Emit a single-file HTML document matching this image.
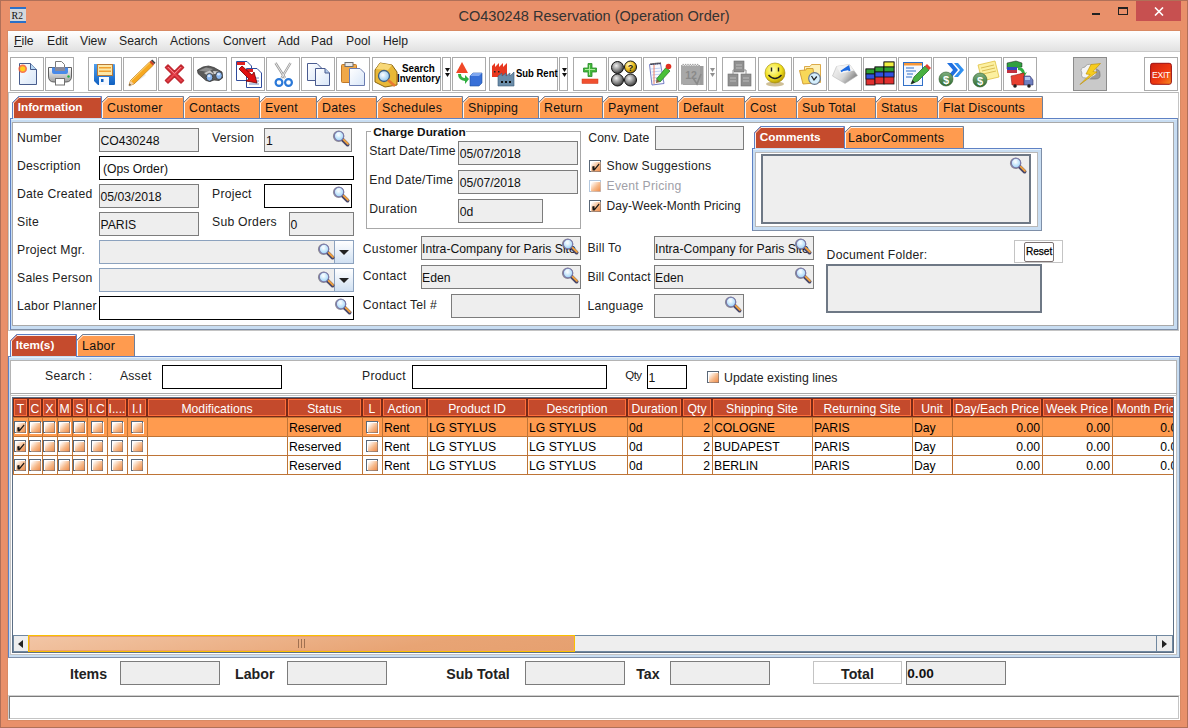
<!DOCTYPE html><html><head><meta charset="utf-8"><style>
html,body{margin:0;padding:0;width:1188px;height:728px;overflow:hidden;background:#E9906A;font-family:"Liberation Sans", sans-serif;}
div{box-sizing:border-box;}
</style></head><body>
<div style="position:absolute;left:0px;top:0px;width:1188px;height:728px;border:1px solid #B07058;background:#E9906A"></div>
<svg style="position:absolute;left:10px;top:7px" width="16" height="16" viewBox="0 0 16 16"><rect x="0" y="0" width="16" height="16" fill="#D4D8DC"/><rect x="0" y="0" width="16" height="2" fill="#2A70C8"/><rect x="0" y="14" width="16" height="2" fill="#2A70C8"/><text x="1.5" y="11.5" font-family="Liberation Serif" font-size="10" fill="#111">R</text><text x="8.2" y="12" font-family="Liberation Serif" font-size="9.5" fill="#222">2</text></svg>
<div style="position:absolute;left:394px;width:400px;text-align:center;top:7.81px;font-size:14.57px;line-height:16.76px;color:#333;font-weight:normal;white-space:nowrap;">CO430248 Reservation (Operation Order)</div>
<div style="position:absolute;left:1092px;top:13px;width:8px;height:2px;background:#222"></div>
<div style="position:absolute;left:1118px;top:7px;width:10px;height:8px;border:1px solid #222;border-top-width:2px"></div>
<div style="position:absolute;left:1136px;top:1px;width:45px;height:20px;background:#C75050"></div>
<svg style="position:absolute;left:1154px;top:7px" width="10" height="9" viewBox="0 0 10 9"><path d="M1 0.5L9 8.5M9 0.5L1 8.5" stroke="#fff" stroke-width="1.6"/></svg>
<div style="position:absolute;left:7px;top:30px;width:1174px;height:691px;border:1px solid #D98A64"></div>
<div style="position:absolute;left:8px;top:31px;width:1172px;height:689px;background:#fff"></div>
<div style="position:absolute;left:8px;top:31px;width:1172px;height:21px;background:linear-gradient(#FFFFFF,#F4F4F4 40%,#E2E2E2);border-bottom:1px solid #C9C9C9"></div>
<div style="position:absolute;left:14px;top:33.96px;font-size:12.2px;line-height:14.03px;color:#1E1E1E;font-weight:normal;white-space:nowrap;">File</div>
<div style="position:absolute;left:47px;top:33.96px;font-size:12.2px;line-height:14.03px;color:#1E1E1E;font-weight:normal;white-space:nowrap;">Edit</div>
<div style="position:absolute;left:80px;top:33.96px;font-size:12.2px;line-height:14.03px;color:#1E1E1E;font-weight:normal;white-space:nowrap;">View</div>
<div style="position:absolute;left:119px;top:33.96px;font-size:12.2px;line-height:14.03px;color:#1E1E1E;font-weight:normal;white-space:nowrap;">Search</div>
<div style="position:absolute;left:170px;top:33.96px;font-size:12.2px;line-height:14.03px;color:#1E1E1E;font-weight:normal;white-space:nowrap;">Actions</div>
<div style="position:absolute;left:223px;top:33.96px;font-size:12.2px;line-height:14.03px;color:#1E1E1E;font-weight:normal;white-space:nowrap;">Convert</div>
<div style="position:absolute;left:278px;top:33.96px;font-size:12.2px;line-height:14.03px;color:#1E1E1E;font-weight:normal;white-space:nowrap;">Add</div>
<div style="position:absolute;left:311px;top:33.96px;font-size:12.2px;line-height:14.03px;color:#1E1E1E;font-weight:normal;white-space:nowrap;">Pad</div>
<div style="position:absolute;left:346px;top:33.96px;font-size:12.2px;line-height:14.03px;color:#1E1E1E;font-weight:normal;white-space:nowrap;">Pool</div>
<div style="position:absolute;left:383px;top:33.96px;font-size:12.2px;line-height:14.03px;color:#1E1E1E;font-weight:normal;white-space:nowrap;">Help</div>
<div style="position:absolute;left:14px;top:46px;width:8px;height:1px;background:#222"></div>
<div style="position:absolute;left:8px;top:92px;width:1171px;height:1px;background:#B8B8B8"></div>
<div style="position:absolute;left:1178px;top:92px;width:1px;height:544px;background:#B8B8B8;display:none"></div>
<div style="position:absolute;left:10px;top:57px;width:34px;height:34px;border:1px solid #ABABAB;background:#fff"></div>
<div style="position:absolute;left:45px;top:57px;width:29px;height:34px;border:1px solid #ABABAB;background:#fff"></div>
<div style="position:absolute;left:88px;top:57px;width:34px;height:34px;border:1px solid #ABABAB;background:#fff"></div>
<div style="position:absolute;left:123px;top:57px;width:34px;height:34px;border:1px solid #ABABAB;background:#fff"></div>
<div style="position:absolute;left:158px;top:57px;width:34px;height:34px;border:1px solid #ABABAB;background:#fff"></div>
<div style="position:absolute;left:193px;top:57px;width:34px;height:34px;border:1px solid #ABABAB;background:#fff"></div>
<div style="position:absolute;left:231px;top:57px;width:34px;height:34px;border:1px solid #ABABAB;background:#fff"></div>
<div style="position:absolute;left:266px;top:57px;width:34px;height:34px;border:1px solid #ABABAB;background:#fff"></div>
<div style="position:absolute;left:301px;top:57px;width:34px;height:34px;border:1px solid #ABABAB;background:#fff"></div>
<div style="position:absolute;left:336px;top:57px;width:34px;height:34px;border:1px solid #ABABAB;background:#fff"></div>
<div style="position:absolute;left:372px;top:57px;width:69px;height:34px;border:1px solid #ABABAB;background:#fff"></div>
<div style="position:absolute;left:442px;top:57px;width:9px;height:34px;border:1px solid #ABABAB;background:#fff"></div>
<div style="position:absolute;left:452px;top:57px;width:34px;height:34px;border:1px solid #ABABAB;background:#fff"></div>
<div style="position:absolute;left:489px;top:57px;width:69px;height:34px;border:1px solid #ABABAB;background:#fff"></div>
<div style="position:absolute;left:559px;top:57px;width:9px;height:34px;border:1px solid #ABABAB;background:#fff"></div>
<div style="position:absolute;left:573px;top:57px;width:34px;height:34px;border:1px solid #ABABAB;background:#fff"></div>
<div style="position:absolute;left:608px;top:57px;width:34px;height:34px;border:1px solid #ABABAB;background:#fff"></div>
<div style="position:absolute;left:643px;top:57px;width:34px;height:34px;border:1px solid #ABABAB;background:#fff"></div>
<div style="position:absolute;left:678px;top:57px;width:29px;height:34px;border:1px solid #ABABAB;background:#fff"></div>
<div style="position:absolute;left:708px;top:57px;width:9px;height:34px;border:1px solid #ABABAB;background:#fff"></div>
<div style="position:absolute;left:722px;top:57px;width:34px;height:34px;border:1px solid #ABABAB;background:#fff"></div>
<div style="position:absolute;left:758px;top:57px;width:34px;height:34px;border:1px solid #ABABAB;background:#fff"></div>
<div style="position:absolute;left:793px;top:57px;width:34px;height:34px;border:1px solid #ABABAB;background:#fff"></div>
<div style="position:absolute;left:828px;top:57px;width:34px;height:34px;border:1px solid #ABABAB;background:#fff"></div>
<div style="position:absolute;left:863px;top:57px;width:34px;height:34px;border:1px solid #ABABAB;background:#fff"></div>
<div style="position:absolute;left:898px;top:57px;width:34px;height:34px;border:1px solid #ABABAB;background:#fff"></div>
<div style="position:absolute;left:933px;top:57px;width:34px;height:34px;border:1px solid #ABABAB;background:#fff"></div>
<div style="position:absolute;left:968px;top:57px;width:34px;height:34px;border:1px solid #ABABAB;background:#fff"></div>
<div style="position:absolute;left:1003px;top:57px;width:34px;height:34px;border:1px solid #ABABAB;background:#fff"></div>
<div style="position:absolute;left:1144px;top:57px;width:34px;height:34px;border:1px solid #ABABAB;background:#fff"></div>
<div style="position:absolute;left:1073px;top:57px;width:34px;height:34px;border:1px solid #8C8C8C;background:#C9C9C9"></div>
<svg style="position:absolute;left:0;top:0" width="1188" height="100" viewBox="0 0 1188 100"><defs>
<linearGradient id="gdoc" x1="0" y1="0" x2="1" y2="1"><stop offset="0" stop-color="#FFFFFF"/><stop offset="1" stop-color="#D8E6F8"/></linearGradient>
<linearGradient id="gblue" x1="0" y1="0" x2="0" y2="1"><stop offset="0" stop-color="#4FA0F0"/><stop offset="1" stop-color="#1060C0"/></linearGradient>
<radialGradient id="gball" cx="0.4" cy="0.35" r="0.7"><stop offset="0" stop-color="#F0F0F0"/><stop offset="0.6" stop-color="#808080"/><stop offset="1" stop-color="#303030"/></radialGradient>
<radialGradient id="gyball" cx="0.35" cy="0.3" r="0.8"><stop offset="0" stop-color="#FFF8C0"/><stop offset="0.5" stop-color="#F0C020"/><stop offset="1" stop-color="#806000"/></radialGradient>
<radialGradient id="gsmile" cx="0.4" cy="0.35" r="0.7"><stop offset="0" stop-color="#FFFFB0"/><stop offset="0.6" stop-color="#F0E020"/><stop offset="1" stop-color="#B09000"/></radialGradient>
<radialGradient id="glens" cx="0.4" cy="0.4" r="0.6"><stop offset="0" stop-color="#FFFFFF"/><stop offset="1" stop-color="#90C8F0"/></radialGradient>
<linearGradient id="gexit" x1="0" y1="0" x2="1" y2="1"><stop offset="0" stop-color="#D02010"/><stop offset="0.6" stop-color="#F03A10"/><stop offset="1" stop-color="#F89020"/></linearGradient>
<linearGradient id="gcoin" x1="0" y1="0" x2="0" y2="1"><stop offset="0" stop-color="#80B080"/><stop offset="1" stop-color="#2E6A2E"/></linearGradient>
<linearGradient id="gprint" x1="0" y1="0" x2="0" y2="1"><stop offset="0" stop-color="#FFFFFF"/><stop offset="1" stop-color="#A0A0A0"/></linearGradient>
</defs><path d="M19.5 63.5H30.5L36.5 69.5V84.5H19.5Z" fill="url(#gdoc)" stroke="#485C8C"/><path d="M30.5 63.5V69.5H36.5" fill="#B8D8F4" stroke="#485C8C"/><circle cx="22.7" cy="68.8" r="4.3" fill="#F86030" opacity="0.85"/><circle cx="22.7" cy="68.8" r="2.6" fill="#FFD020"/><path d="M55.5 61.5H61.5L64.5 64.5V72H55.5Z" fill="#fff" stroke="#7A7A7A"/><path d="M48.5 67.5H71.5V76Q71.5 82 66 82H54Q48.5 82 48.5 76Z" fill="url(#gprint)" stroke="#606060"/><path d="M52 67.5H68V72Q68 74 66 74H54Q52 74 52 72Z" fill="#4A8AE8"/><rect x="55" y="67" width="10" height="4" fill="#8A8A98"/><rect x="55.5" y="78.5" width="9" height="6.5" fill="#fff" stroke="#707070"/><circle cx="68.5" cy="76.5" r="1.2" fill="#20B040"/><path d="M94 64H114Q115 64 115 65V84Q115 85 114 85H98L94 81Z" fill="url(#gblue)"/><rect x="97.5" y="64.5" width="15" height="11" fill="#FCE8A8" stroke="#B87A38"/><rect x="99" y="67" width="12" height="1.5" fill="#F0A030"/><rect x="99" y="70.5" width="12" height="1.5" fill="#F0A030"/><rect x="99" y="77" width="10" height="8" fill="#F4F8FF"/><rect x="101" y="79" width="2.5" height="3" fill="#1060C0"/><path d="M129 86L145 74" stroke="#E0E0E0" stroke-width="3" opacity="0.7"/><path d="M129 85.5L130.5 80.5L149.5 62L153 65.5L134 84Z" fill="#F6A820" stroke="#C07A10" stroke-width="0.7"/><path d="M131 81L150 62.5" stroke="#FFD878" stroke-width="1"/><path d="M129 85.5L130.5 80.5L134 84Z" fill="#F0D0A8"/><path d="M129 85.5L129.6 83.4L131.2 84.9Z" fill="#444"/><path d="M149.5 62L151 60.6L154.4 64L153 65.5Z" fill="#D04020"/><path d="M151 60.6L152.3 59.5L155.5 62.7L154.4 64Z" fill="#404040"/><path d="M165.5 67.5L168 65L174.5 71.5L181 65L183.5 67.5L177 74L183.5 80.5L181 83L174.5 76.5L168 83L165.5 80.5L172 74Z" fill="#E8424C" stroke="#C02830" stroke-width="1.6" stroke-linejoin="round"/><path d="M168 67L174.5 73.5L181 67" stroke="#F8A0A8" stroke-width="1" fill="none" opacity="0.7"/><path d="M197.5 70L203 67L208.5 66L214 67.5L222 72L222.5 78L219 80.5L214 80L210 81.5L206 80.5L198 73.5Z" fill="#5A5A5A" stroke="#3A3A3A" stroke-width="0.8"/><path d="M199 70.5L206 67.5L213 69L208 72Z" fill="#909090"/><path d="M204 73L210 70.5L214 74L208 76Z" fill="#C8C8C8"/><path d="M213 71L219 71.5L218 74L214 74Z" fill="#D0D0D0"/><ellipse cx="209.5" cy="77.3" rx="3.3" ry="3.9" fill="#8CB8F0" stroke="#3A3A3A" stroke-width="0.9"/><ellipse cx="219" cy="75.6" rx="3.3" ry="3.9" fill="#8CB8F0" stroke="#3A3A3A" stroke-width="0.9"/><ellipse cx="209" cy="76" rx="1.5" ry="1.3" fill="#D8E8FF"/><ellipse cx="218.5" cy="74.3" rx="1.5" ry="1.3" fill="#D8E8FF"/><path d="M236.5 61.5H247L251.5 66V80.5H236.5Z" fill="#fff" stroke="#304C9C"/><rect x="237" y="62" width="8" height="3" fill="#E02020"/><path d="M246.5 68.5H257L261.5 73V87.5H246.5Z" fill="#fff" stroke="#304C9C"/><rect x="247" y="69" width="6" height="3" fill="#E02020"/><path d="M249 78H259M249 81H259M249 84H259" stroke="#5070B0" stroke-width="0.8"/><path d="M239 69L242 66L252 75L254 72L257 83L246 81L249 79Z" fill="#E01010" stroke="#700000" stroke-width="0.8"/><path d="M275.5 63L285 78M290.5 63L281.5 78" stroke="#9A9A9A" stroke-width="2.4"/><path d="M275.5 63L285 78M290.5 63L281.5 78" stroke="#E8E8E8" stroke-width="1"/><circle cx="279" cy="82.5" r="3.4" fill="none" stroke="#2A78D8" stroke-width="2.2"/><circle cx="288.5" cy="82.5" r="3.4" fill="none" stroke="#2A78D8" stroke-width="2.2"/><path d="M307.5 63.5H317L321.5 68V80.5H307.5Z" fill="url(#gdoc)" stroke="#4A5C90"/><path d="M315.5 68.5H325L329.5 73V85.5H315.5Z" fill="url(#gdoc)" stroke="#4A5C90"/><path d="M325 68.5V73H329.5" fill="#B0C8E8" stroke="#4A5C90"/><rect x="341.5" y="64.5" width="15" height="18" rx="1" fill="#F0A848" stroke="#C07828"/><rect x="345" y="62.5" width="8" height="4" fill="#E8E8E8" stroke="#707070"/><path d="M349.5 68.5H360L364.5 73V85.5H349.5Z" fill="url(#gdoc)" stroke="#6A7CB0"/><path d="M375 70L380 63L392 65L397 72V85L385 87L375 82Z" fill="#E8B838" stroke="#8A6410"/><path d="M380 63L392 65L388 70L376 69Z" fill="#F8D878"/><circle cx="384" cy="76" r="5.5" fill="url(#glens)" stroke="#406080" stroke-width="1.3"/><path d="M388 80L395 86" stroke="#E87830" stroke-width="2.6"/><path d="M445 68H450L447.5 72Z M445 73H450L447.5 77Z" fill="#111"/><path d="M462 62L468 73H456Z" fill="#F04828"/><path d="M458 74Q458 80 465 81L465 84L469 79L465 75L465 78Q461 78 461 74Z" fill="#30B040"/><path d="M470 76L473 73H482V83L479 86H470Z" fill="#3870D8" stroke="#2050A0" stroke-width="0.6"/><path d="M470 76L473 73H482L479 76Z" fill="#80A8F0"/><path d="M492 77V66L495 63V67L499 63V67L503 63V67L507 63V77Z" fill="#E83820"/><path d="M494 71h1.5v1.5h-1.5zM498 71h1.5v1.5h-1.5z" fill="#222"/><path d="M498 86V76L502 73V76L506 73V76L510 73V76L514 72V86Z" fill="#6A8CA8" stroke="#3A5A78" stroke-width="0.6"/><path d="M501 81h2v2h-2zM505 81h2v2h-2zM509 81h2v2h-2z" fill="#111"/><path d="M562 68H567L564.5 72Z M562 73H567L564.5 77Z" fill="#111"/><path d="M588 63.5H592V68H596.5V72H592V76.5H588V72H583.5V68H588Z" fill="#44B83C" stroke="#2A8A2A" stroke-width="0.8"/><path d="M589.5 65V75M585 69.5H595" stroke="#B8F0A8" stroke-width="0.9"/><rect x="582" y="79" width="16" height="4.5" fill="#F05030" stroke="#D03818" stroke-width="0.5"/><g stroke="#111" stroke-width="1"><circle cx="617.5" cy="67.5" r="6" fill="url(#gball)"/><circle cx="630.5" cy="67" r="6" fill="url(#gyball)"/><circle cx="617.5" cy="80" r="6" fill="url(#gball)"/><circle cx="630.5" cy="80" r="6" fill="url(#gball)"/></g><text x="630.5" y="70.5" font-size="9" font-weight="bold" text-anchor="middle" fill="#222" font-family="Liberation Sans">?</text><path d="M649.5 64.5L660.5 63.5L664 83.5L652 85Z" fill="#F8FAFF" stroke="#6870C0" stroke-width="0.9"/><path d="M651 69L661.5 68M651.5 72L662 71M652 75L662.5 74M652.5 78L663 77M652.8 81L663.3 80" stroke="#A8C0F0" stroke-width="0.7"/><path d="M654 65V84" stroke="#F06040" stroke-width="0.8"/><path d="M650.5 64.2L661 63.2" stroke="#222" stroke-width="1.8" stroke-dasharray="1.2 0.8"/><path d="M656.5 79L666 67.5L670 71L660 82Z" fill="#48C038" stroke="#207020" stroke-width="0.7"/><path d="M656.5 79L660 82L656 83Z" fill="#806040"/><circle cx="668.5" cy="66.5" r="2.8" fill="#E03020"/><rect x="683" y="66" width="20.5" height="19" fill="#9C9C9C"/><rect x="681" y="65" width="19" height="19.5" fill="#A8A8A8"/><path d="M682.5 64.5H699" stroke="#F0F0F0" stroke-width="2.4" stroke-dasharray="1.4 1"/><path d="M682.5 64.5H699" stroke="#707070" stroke-width="0.6" stroke-dasharray="1.4 1"/><text x="691" y="78.5" font-size="10.5" font-weight="bold" text-anchor="middle" fill="#8A8A8A" font-family="Liberation Sans">12</text><path d="M693 78L697 84L701 74" stroke="#8A8A8A" stroke-width="1.6" fill="none"/><path d="M710 68H715L712.5 72Z M710 73H715L712.5 77Z" fill="#909090"/><rect x="734" y="61" width="10" height="11" fill="#909090" stroke="#707070" stroke-width="0.6"/><rect x="728" y="74" width="10" height="12" fill="#909090" stroke="#707070" stroke-width="0.6"/><rect x="741" y="74" width="10" height="12" fill="#909090" stroke="#707070" stroke-width="0.6"/><path d="M733 74V70H746V74" stroke="#909090" fill="none"/><path d="M736 65h6M736 68h6M730 78h6M730 81h6M743 78h6M743 81h6" stroke="#C8C8C8" stroke-width="0.8"/><ellipse cx="775" cy="84" rx="9" ry="2.5" fill="#A08030" opacity="0.5"/><circle cx="775" cy="73" r="10" fill="url(#gsmile)" stroke="#A08800" stroke-width="0.6"/><path d="M771.5 67.5v4M778.5 67.5v4" stroke="#222" stroke-width="1.4"/><path d="M768.5 75Q775 82 781.5 75" stroke="#222" stroke-width="1.4" fill="none"/><path d="M804.5 66.5H810L811.5 64.5H820.5V82.5H804.5Z" fill="#FDF0B8" stroke="#D8A038" stroke-width="0.9"/><path d="M799.5 70.5L806 70L806.5 68.5H813L815 83L803 84Z" fill="#F8D858" stroke="#D09A30" stroke-width="0.9"/><circle cx="814.5" cy="78.5" r="5.8" fill="#D4EEFC" stroke="#6A7A90" stroke-width="1.2"/><path d="M811.5 76L814 80L816.8 76.5" stroke="#222" stroke-width="1.3" fill="none"/><defs><linearGradient id="gkey" x1="0" y1="0" x2="1" y2="0.6"><stop offset="0" stop-color="#F8F8F8"/><stop offset="0.6" stop-color="#D8D8D8"/><stop offset="1" stop-color="#808080"/></linearGradient></defs><path d="M836.5 66.5L849.5 64.5L857.5 75.5L845 83.5L832.5 76Z" fill="url(#gkey)" stroke="#B8B8B8" stroke-width="0.6"/><path d="M836.5 66.5L849.5 64.5L854 70.5L840.5 73.5Z" fill="#F4F4F4"/><path d="M841 71.5L848.5 66.5L849.5 71M843.5 70L849 69" stroke="#1E6AE0" stroke-width="1.9" fill="none"/><g stroke="#111" stroke-width="0.8"><rect x="866" y="69" width="9" height="16" fill="#E03030"/><rect x="866" y="69" width="9" height="5" fill="#30A030"/><rect x="866" y="74" width="9" height="5" fill="#3050E0"/><rect x="875" y="67" width="9" height="17" fill="#E03030"/><rect x="875" y="67" width="9" height="5" fill="#30A030"/><rect x="875" y="72" width="9" height="5" fill="#3050E0"/><rect x="884" y="62" width="10" height="22" fill="#E03030"/><rect x="884" y="62" width="10" height="5" fill="#F0F040"/><rect x="884" y="67" width="10" height="5" fill="#30A030"/><rect x="884" y="72" width="10" height="5" fill="#3050E0"/></g><rect x="903.5" y="62.5" width="19" height="23" fill="#F4F8FF" stroke="#3070C8"/><rect x="904" y="63" width="18" height="2.5" fill="#F89838"/><path d="M906 68h8M906 71h10M907 74h6M906 77h6" stroke="#3070C8" stroke-width="1"/><path d="M911 84L914 77L925 66L929 70L918 81Z" fill="#48B040" stroke="#206820" stroke-width="0.7"/><path d="M925 66L927 64L931 68L929 70Z" fill="#E04030"/><path d="M911 84L912.5 80L915 82.5Z" fill="#222"/><path d="M947 63L952 63L958 70L952 77L947 77L953 70Z" fill="#2070E0"/><path d="M954 63L958 63L964 70L958 77L954 77L960 70Z" fill="#3090F0"/><circle cx="946" cy="79" r="7" fill="url(#gcoin)" stroke="#2A5A2A" stroke-width="0.6"/><text x="946" y="83.5" font-size="11" font-weight="bold" text-anchor="middle" fill="#fff" font-family="Liberation Sans">$</text><path d="M978 65L995 61L999 77L982 81Z" fill="#FCF0A0" stroke="#E0C040" stroke-width="0.8"/><path d="M981 68L994 65M982 71L995 68M983 74L996 71" stroke="#D0B040" stroke-width="0.8"/><circle cx="980" cy="80" r="7" fill="url(#gcoin)" stroke="#2A5A2A" stroke-width="0.6"/><text x="980" y="84.5" font-size="11" font-weight="bold" text-anchor="middle" fill="#fff" font-family="Liberation Sans">$</text><path d="M1007 63L1016 61L1022 63V67L1007 69Z" fill="#30A040" stroke="#222" stroke-width="0.5"/><rect x="1007" y="67" width="10" height="3" fill="#3048C0"/><rect x="1007" y="70" width="10" height="3" fill="#C03040"/><path d="M1018 67Q1024 67 1025 73L1027 72L1024 77L1020 73L1022 73Q1021 70 1018 70Z" fill="#30B040"/><path d="M1011 76L1024 73V85H1012Z" fill="#E84030" stroke="#902020" stroke-width="0.6"/><path d="M1024 76H1030L1033 80V85H1024Z" fill="#7080C0" stroke="#303060" stroke-width="0.6"/><rect x="1025" y="77" width="5" height="3" fill="#B0C8F0"/><circle cx="1015" cy="86" r="1.8" fill="#222"/><circle cx="1029" cy="86" r="1.8" fill="#222"/><path d="M1094 70Q1100 68 1100 74Q1101 79 1095 79H1090Z" fill="#9A9A9A" stroke="#707070" stroke-width="0.6"/><path d="M1082 73Q1079 68 1085 67Q1087 63 1092 65Q1097 64 1096 70Q1098 75 1092 77Q1090 80 1086 78Q1080 78 1082 73Z" fill="#F4F4F4" stroke="#909090" stroke-width="0.7"/><path d="M1091 64.5L1100.5 63.5L1093 71.5L1097 72L1080 84.5L1090 74.5L1086 74Z" fill="#F6CC1E" stroke="#B88A00" stroke-width="0.6" stroke-linejoin="round"/><rect x="1150.6" y="63.3" width="20.8" height="21" rx="2.2" fill="url(#gexit)" stroke="#9A1010" stroke-width="1"/><text x="1161" y="77.6" font-size="9.6" text-anchor="middle" fill="#fff" font-family="Liberation Sans" letter-spacing="-0.4" textLength="18" lengthAdjust="spacingAndGlyphs">EXIT</text></svg>
<div style="position:absolute;left:401.6px;top:63.48px;font-size:10.3px;line-height:11.85px;color:#000;font-weight:bold;white-space:nowrap;transform:scaleX(0.955);transform-origin:0 0">Search</div>
<div style="position:absolute;left:396.9px;top:72.58px;font-size:10.3px;line-height:11.85px;color:#000;font-weight:bold;white-space:nowrap;transform:scaleX(0.935);transform-origin:0 0">Inventory</div>
<div style="position:absolute;left:515.9px;top:68.27px;font-size:10.2px;line-height:11.73px;color:#000;font-weight:bold;white-space:nowrap;transform:scaleX(0.93);transform-origin:0 0">Sub Rent</div>
<svg style="position:absolute;left:0;top:0" width="1188" height="120" viewBox="0 0 1188 120"><path d="M101.5 118V102.5L107.5 96.5H183.5V118" fill="#FF9B4F" stroke="#6D7F9A" stroke-width="1"/><path d="M102.5 118V103L108 97.5H182.5" fill="none" stroke="#FFFFFF" stroke-width="1" opacity="0.9"/><path d="M183.5 118V102.5L189.5 96.5H259.5V118" fill="#FF9B4F" stroke="#6D7F9A" stroke-width="1"/><path d="M184.5 118V103L190 97.5H258.5" fill="none" stroke="#FFFFFF" stroke-width="1" opacity="0.9"/><path d="M259.5 118V102.5L265.5 96.5H316.5V118" fill="#FF9B4F" stroke="#6D7F9A" stroke-width="1"/><path d="M260.5 118V103L266 97.5H315.5" fill="none" stroke="#FFFFFF" stroke-width="1" opacity="0.9"/><path d="M316.5 118V102.5L322.5 96.5H376.5V118" fill="#FF9B4F" stroke="#6D7F9A" stroke-width="1"/><path d="M317.5 118V103L323 97.5H375.5" fill="none" stroke="#FFFFFF" stroke-width="1" opacity="0.9"/><path d="M376.5 118V102.5L382.5 96.5H462.5V118" fill="#FF9B4F" stroke="#6D7F9A" stroke-width="1"/><path d="M377.5 118V103L383 97.5H461.5" fill="none" stroke="#FFFFFF" stroke-width="1" opacity="0.9"/><path d="M462.5 118V102.5L468.5 96.5H538.5V118" fill="#FF9B4F" stroke="#6D7F9A" stroke-width="1"/><path d="M463.5 118V103L469 97.5H537.5" fill="none" stroke="#FFFFFF" stroke-width="1" opacity="0.9"/><path d="M538.5 118V102.5L544.5 96.5H602.5V118" fill="#FF9B4F" stroke="#6D7F9A" stroke-width="1"/><path d="M539.5 118V103L545 97.5H601.5" fill="none" stroke="#FFFFFF" stroke-width="1" opacity="0.9"/><path d="M602.5 118V102.5L608.5 96.5H677.5V118" fill="#FF9B4F" stroke="#6D7F9A" stroke-width="1"/><path d="M603.5 118V103L609 97.5H676.5" fill="none" stroke="#FFFFFF" stroke-width="1" opacity="0.9"/><path d="M677.5 118V102.5L683.5 96.5H744.5V118" fill="#FF9B4F" stroke="#6D7F9A" stroke-width="1"/><path d="M678.5 118V103L684 97.5H743.5" fill="none" stroke="#FFFFFF" stroke-width="1" opacity="0.9"/><path d="M744.5 118V102.5L750.5 96.5H796.5V118" fill="#FF9B4F" stroke="#6D7F9A" stroke-width="1"/><path d="M745.5 118V103L751 97.5H795.5" fill="none" stroke="#FFFFFF" stroke-width="1" opacity="0.9"/><path d="M796.5 118V102.5L802.5 96.5H875.5V118" fill="#FF9B4F" stroke="#6D7F9A" stroke-width="1"/><path d="M797.5 118V103L803 97.5H874.5" fill="none" stroke="#FFFFFF" stroke-width="1" opacity="0.9"/><path d="M875.5 118V102.5L881.5 96.5H937.5V118" fill="#FF9B4F" stroke="#6D7F9A" stroke-width="1"/><path d="M876.5 118V103L882 97.5H936.5" fill="none" stroke="#FFFFFF" stroke-width="1" opacity="0.9"/><path d="M937.5 118V102.5L943.5 96.5H1042.5V118" fill="#FF9B4F" stroke="#6D7F9A" stroke-width="1"/><path d="M938.5 118V103L944 97.5H1041.5" fill="none" stroke="#FFFFFF" stroke-width="1" opacity="0.9"/><path d="M12.5 118V102.5L18.5 96.5H101.5V118" fill="#C54B2D" stroke="#5E81C4" stroke-width="1"/><path d="M13.5 118V103L19 97.5H100.5" fill="none" stroke="#FFFFFF" stroke-width="1" opacity="0.9"/></svg>
<div style="position:absolute;left:17.7px;top:101.32px;font-size:11.8px;line-height:13.57px;color:#FFFFFF;font-weight:bold;white-space:nowrap;">Information</div>
<div style="position:absolute;left:107px;top:100.78px;font-size:12.4px;line-height:14.26px;color:#111;font-weight:normal;white-space:nowrap;letter-spacing:0.25px;">Customer</div>
<div style="position:absolute;left:189px;top:100.78px;font-size:12.4px;line-height:14.26px;color:#111;font-weight:normal;white-space:nowrap;letter-spacing:0.25px;">Contacts</div>
<div style="position:absolute;left:265px;top:100.78px;font-size:12.4px;line-height:14.26px;color:#111;font-weight:normal;white-space:nowrap;letter-spacing:0.25px;">Event</div>
<div style="position:absolute;left:322px;top:100.78px;font-size:12.4px;line-height:14.26px;color:#111;font-weight:normal;white-space:nowrap;letter-spacing:0.25px;">Dates</div>
<div style="position:absolute;left:382px;top:100.78px;font-size:12.4px;line-height:14.26px;color:#111;font-weight:normal;white-space:nowrap;letter-spacing:0.25px;">Schedules</div>
<div style="position:absolute;left:468px;top:100.78px;font-size:12.4px;line-height:14.26px;color:#111;font-weight:normal;white-space:nowrap;letter-spacing:0.25px;">Shipping</div>
<div style="position:absolute;left:544px;top:100.78px;font-size:12.4px;line-height:14.26px;color:#111;font-weight:normal;white-space:nowrap;letter-spacing:0.25px;">Return</div>
<div style="position:absolute;left:608px;top:100.78px;font-size:12.4px;line-height:14.26px;color:#111;font-weight:normal;white-space:nowrap;letter-spacing:0.25px;">Payment</div>
<div style="position:absolute;left:683px;top:100.78px;font-size:12.4px;line-height:14.26px;color:#111;font-weight:normal;white-space:nowrap;letter-spacing:0.25px;">Default</div>
<div style="position:absolute;left:750px;top:100.78px;font-size:12.4px;line-height:14.26px;color:#111;font-weight:normal;white-space:nowrap;letter-spacing:0.25px;">Cost</div>
<div style="position:absolute;left:802px;top:100.78px;font-size:12.4px;line-height:14.26px;color:#111;font-weight:normal;white-space:nowrap;letter-spacing:0.25px;">Sub Total</div>
<div style="position:absolute;left:881px;top:100.78px;font-size:12.4px;line-height:14.26px;color:#111;font-weight:normal;white-space:nowrap;letter-spacing:0.25px;">Status</div>
<div style="position:absolute;left:943px;top:100.78px;font-size:12.4px;line-height:14.26px;color:#111;font-weight:normal;white-space:nowrap;letter-spacing:0.25px;">Flat Discounts</div>
<div style="position:absolute;left:8px;top:92px;width:1171px;height:239px;border:1px solid #C4C4C4;border-top-color:#B8B8B8"></div>
<div style="position:absolute;left:10px;top:118px;width:1168px;height:212px;background:#C8DDF2;border-top:1px solid #5E81C4;border-left:1px solid #5E81C4;border-right:1px solid #7E8FA8;border-bottom:1px solid #7E8FA8"></div>
<div style="position:absolute;left:11px;top:119px;width:1166px;height:1px;background:#E6F0FA"></div>
<div style="position:absolute;left:12px;top:122px;width:1162px;height:204px;background:#fff;border:1px solid #A9A9A9"></div>
<div style="position:absolute;left:13px;top:118px;width:89px;height:1px;background:#C8DDF2"></div>
<div style="position:absolute;left:17px;top:130.96px;font-size:12.2px;line-height:14.03px;color:#222;font-weight:normal;white-space:nowrap;letter-spacing:0.25px;">Number</div>
<div style="position:absolute;left:17px;top:158.96px;font-size:12.2px;line-height:14.03px;color:#222;font-weight:normal;white-space:nowrap;letter-spacing:0.25px;">Description</div>
<div style="position:absolute;left:17px;top:186.96px;font-size:12.2px;line-height:14.03px;color:#222;font-weight:normal;white-space:nowrap;letter-spacing:0.25px;">Date Created</div>
<div style="position:absolute;left:17px;top:214.96px;font-size:12.2px;line-height:14.03px;color:#222;font-weight:normal;white-space:nowrap;letter-spacing:0.25px;">Site</div>
<div style="position:absolute;left:17px;top:242.96px;font-size:12.2px;line-height:14.03px;color:#222;font-weight:normal;white-space:nowrap;letter-spacing:0.25px;">Project Mgr.</div>
<div style="position:absolute;left:17px;top:270.96px;font-size:12.2px;line-height:14.03px;color:#222;font-weight:normal;white-space:nowrap;letter-spacing:0.25px;">Sales Person</div>
<div style="position:absolute;left:17px;top:298.96px;font-size:12.2px;line-height:14.03px;color:#222;font-weight:normal;white-space:nowrap;letter-spacing:0.25px;">Labor Planner</div>
<div style="position:absolute;left:99px;top:128px;width:100px;height:24px;background:#EEEEEE;border:1px solid #7C7C7C;"></div>
<div style="position:absolute;left:99px;top:128px;width:99px;height:23px;overflow:hidden">
<div style="position:absolute;left:1.5px;top:5.96px;font-size:12.2px;line-height:14.03px;color:#111;font-weight:normal;white-space:nowrap;">CO430248</div>
</div>
<div style="position:absolute;left:99px;top:156px;width:255px;height:24px;background:#FFFFFF;border:1px solid #000000;"></div>
<div style="position:absolute;left:99px;top:156px;width:254px;height:23px;overflow:hidden">
<div style="position:absolute;left:4px;top:5.96px;font-size:12.2px;line-height:14.03px;color:#111;font-weight:normal;white-space:nowrap;">(Ops Order)</div>
</div>
<div style="position:absolute;left:99px;top:184px;width:100px;height:24px;background:#EEEEEE;border:1px solid #7C7C7C;"></div>
<div style="position:absolute;left:99px;top:184px;width:99px;height:23px;overflow:hidden">
<div style="position:absolute;left:1.5px;top:5.96px;font-size:12.2px;line-height:14.03px;color:#111;font-weight:normal;white-space:nowrap;">05/03/2018</div>
</div>
<div style="position:absolute;left:99px;top:212px;width:100px;height:24px;background:#EEEEEE;border:1px solid #7C7C7C;"></div>
<div style="position:absolute;left:99px;top:212px;width:99px;height:23px;overflow:hidden">
<div style="position:absolute;left:1.5px;top:5.96px;font-size:12.2px;line-height:14.03px;color:#111;font-weight:normal;white-space:nowrap;">PARIS</div>
</div>
<div style="position:absolute;left:212px;top:130.96px;font-size:12.2px;line-height:14.03px;color:#222;font-weight:normal;white-space:nowrap;letter-spacing:0.25px;">Version</div>
<div style="position:absolute;left:212px;top:186.96px;font-size:12.2px;line-height:14.03px;color:#222;font-weight:normal;white-space:nowrap;letter-spacing:0.25px;">Project</div>
<div style="position:absolute;left:212px;top:214.96px;font-size:12.2px;line-height:14.03px;color:#222;font-weight:normal;white-space:nowrap;letter-spacing:0.25px;">Sub Orders</div>
<div style="position:absolute;left:264px;top:128px;width:88px;height:24px;background:#EEEEEE;border:1px solid #7C7C7C;"></div>
<div style="position:absolute;left:264px;top:128px;width:87px;height:23px;overflow:hidden">
<div style="position:absolute;left:2px;top:5.96px;font-size:12.2px;line-height:14.03px;color:#111;font-weight:normal;white-space:nowrap;">1</div>
</div>
<div style="position:absolute;left:264px;top:184px;width:88px;height:24px;background:#FFFFFF;border:1px solid #000000;"></div>
<div style="position:absolute;left:289px;top:212px;width:65px;height:24px;background:#EEEEEE;border:1px solid #7C7C7C;"></div>
<div style="position:absolute;left:289px;top:212px;width:64px;height:23px;overflow:hidden">
<div style="position:absolute;left:1.5px;top:5.96px;font-size:12.2px;line-height:14.03px;color:#111;font-weight:normal;white-space:nowrap;">0</div>
</div>
<div style="position:absolute;left:99px;top:240px;width:255px;height:24px;background:#EEEEEE;border:1px solid #8CA2BE"></div>
<div style="position:absolute;left:334px;top:240px;width:20px;height:24px;background:linear-gradient(#FFFFFF,#D0E0F2);border:1px solid #8CA2BE"></div>
<svg style="position:absolute;left:339px;top:250px" width="10" height="5" viewBox="0 0 10 5"><path d="M0 0H10L5 5Z" fill="#222"/></svg>
<div style="position:absolute;left:99px;top:268px;width:255px;height:24px;background:#EEEEEE;border:1px solid #8CA2BE"></div>
<div style="position:absolute;left:334px;top:268px;width:20px;height:24px;background:linear-gradient(#FFFFFF,#D0E0F2);border:1px solid #8CA2BE"></div>
<svg style="position:absolute;left:339px;top:278px" width="10" height="5" viewBox="0 0 10 5"><path d="M0 0H10L5 5Z" fill="#222"/></svg>
<div style="position:absolute;left:99px;top:296px;width:255px;height:24px;background:#FFFFFF;border:1px solid #000000;"></div>
<div style="position:absolute;left:366px;top:131px;width:215px;height:98px;border:1px solid #A8A8A8"></div>
<div style="position:absolute;left:371px;top:126px;width:95px;height:10px;background:#fff"></div>
<div style="position:absolute;left:373.2px;top:125.52px;font-size:11.8px;line-height:13.57px;color:#111;font-weight:bold;white-space:nowrap;">Charge Duration</div>
<div style="position:absolute;left:369.3px;top:144.26px;font-size:12.2px;line-height:14.03px;color:#222;font-weight:normal;white-space:nowrap;letter-spacing:0.1px;">Start Date/Time</div>
<div style="position:absolute;left:369.3px;top:172.96px;font-size:12.2px;line-height:14.03px;color:#222;font-weight:normal;white-space:nowrap;letter-spacing:0.25px;">End Date/Time</div>
<div style="position:absolute;left:369.3px;top:201.56px;font-size:12.2px;line-height:14.03px;color:#222;font-weight:normal;white-space:nowrap;letter-spacing:0.25px;">Duration</div>
<div style="position:absolute;left:458px;top:141px;width:120px;height:24px;background:#EEEEEE;border:1px solid #7C7C7C;"></div>
<div style="position:absolute;left:458px;top:141px;width:119px;height:23px;overflow:hidden">
<div style="position:absolute;left:1.6999999999999886px;top:5.96px;font-size:12.2px;line-height:14.03px;color:#111;font-weight:normal;white-space:nowrap;">05/07/2018</div>
</div>
<div style="position:absolute;left:458px;top:170px;width:120px;height:24px;background:#EEEEEE;border:1px solid #7C7C7C;"></div>
<div style="position:absolute;left:458px;top:170px;width:119px;height:23px;overflow:hidden">
<div style="position:absolute;left:1.6999999999999886px;top:5.96px;font-size:12.2px;line-height:14.03px;color:#111;font-weight:normal;white-space:nowrap;">05/07/2018</div>
</div>
<div style="position:absolute;left:458px;top:199px;width:85px;height:24px;background:#EEEEEE;border:1px solid #7C7C7C;"></div>
<div style="position:absolute;left:458px;top:199px;width:84px;height:23px;overflow:hidden">
<div style="position:absolute;left:1.6999999999999886px;top:5.96px;font-size:12.2px;line-height:14.03px;color:#111;font-weight:normal;white-space:nowrap;">0d</div>
</div>
<div style="position:absolute;left:588.3px;top:130.96px;font-size:12.2px;line-height:14.03px;color:#222;font-weight:normal;white-space:nowrap;letter-spacing:0.1px;">Conv. Date</div>
<div style="position:absolute;left:655px;top:126px;width:89px;height:24px;background:#EEEEEE;border:1px solid #7C7C7C;"></div>
<div style="position:absolute;left:606.5px;top:159.26px;font-size:12.2px;line-height:14.03px;color:#222;font-weight:normal;white-space:nowrap;letter-spacing:0.25px;">Show Suggestions</div>
<div style="position:absolute;left:606.5px;top:179.46px;font-size:12.2px;line-height:14.03px;color:#A0A0A8;font-weight:normal;white-space:nowrap;letter-spacing:0.25px;">Event Pricing</div>
<div style="position:absolute;left:606.5px;top:199.74px;font-size:12.0px;line-height:13.80px;color:#222;font-weight:normal;white-space:nowrap;letter-spacing:0.05px;">Day-Week-Month Pricing</div>
<svg style="position:absolute;left:0;top:0" width="1188" height="150" viewBox="0 0 1188 150"><path d="M844.5 148V132.5L850.5 126.5H963.5V148" fill="#FF9B4F" stroke="#6D7F9A" stroke-width="1"/><path d="M845.5 148V133L851 127.5H962.5" fill="none" stroke="#FFFFFF" stroke-width="1" opacity="0.9"/><path d="M754.5 148V132.5L760.5 126.5H844.5V148" fill="#C54B2D" stroke="#5E81C4" stroke-width="1"/><path d="M755.5 148V133L761 127.5H843.5" fill="none" stroke="#FFFFFF" stroke-width="1" opacity="0.9"/></svg>
<div style="position:absolute;left:759.7px;top:131.32px;font-size:11.8px;line-height:13.57px;color:#FFFFFF;font-weight:bold;white-space:nowrap;">Comments</div>
<div style="position:absolute;left:848px;top:130.60px;font-size:12.6px;line-height:14.49px;color:#111;font-weight:normal;white-space:nowrap;letter-spacing:0.25px;">LaborComments</div>
<div style="position:absolute;left:752px;top:148px;width:290px;height:83px;background:#C8DDF2;border-top:1px solid #5E81C4;border-left:1px solid #5E81C4;border-right:1px solid #7E8FA8;border-bottom:1px solid #7E8FA8"></div>
<div style="position:absolute;left:753px;top:149px;width:288px;height:1px;background:#E6F0FA"></div>
<div style="position:absolute;left:755px;top:148px;width:89px;height:1px;background:#C8DDF2"></div>
<div style="position:absolute;left:755px;top:152px;width:283px;height:75px;background:#fff;border:1px solid #B8B8B8"></div>
<div style="position:absolute;left:761px;top:154px;width:270px;height:70px;background:#EEEEEE;border:2px solid #6E7885"></div>
<div style="position:absolute;left:362.8px;top:241.56px;font-size:12.2px;line-height:14.03px;color:#222;font-weight:normal;white-space:nowrap;letter-spacing:0.25px;">Customer</div>
<div style="position:absolute;left:362.8px;top:269.46px;font-size:12.2px;line-height:14.03px;color:#222;font-weight:normal;white-space:nowrap;letter-spacing:0.25px;">Contact</div>
<div style="position:absolute;left:362.8px;top:298.26px;font-size:12.2px;line-height:14.03px;color:#222;font-weight:normal;white-space:nowrap;letter-spacing:0.25px;">Contact Tel #</div>
<div style="position:absolute;left:421px;top:236px;width:160px;height:24px;background:#EEEEEE;border:1px solid #7C7C7C;"></div>
<div style="position:absolute;left:421px;top:236px;width:159px;height:23px;overflow:hidden">
<div style="position:absolute;left:1px;top:5.96px;font-size:12.2px;line-height:14.03px;color:#111;font-weight:normal;white-space:nowrap;">Intra-Company for Paris Site</div>
</div>
<div style="position:absolute;left:421px;top:265px;width:160px;height:24px;background:#EEEEEE;border:1px solid #7C7C7C;"></div>
<div style="position:absolute;left:421px;top:265px;width:159px;height:23px;overflow:hidden">
<div style="position:absolute;left:1px;top:5.96px;font-size:12.2px;line-height:14.03px;color:#111;font-weight:normal;white-space:nowrap;">Eden</div>
</div>
<div style="position:absolute;left:451px;top:294px;width:129px;height:24px;background:#EEEEEE;border:1px solid #7C7C7C;"></div>
<div style="position:absolute;left:587.4px;top:240.96px;font-size:12.2px;line-height:14.03px;color:#222;font-weight:normal;white-space:nowrap;letter-spacing:0.25px;">Bill To</div>
<div style="position:absolute;left:587.4px;top:269.76px;font-size:12.2px;line-height:14.03px;color:#222;font-weight:normal;white-space:nowrap;letter-spacing:0.15px;">Bill Contact</div>
<div style="position:absolute;left:587.4px;top:298.86px;font-size:12.2px;line-height:14.03px;color:#222;font-weight:normal;white-space:nowrap;letter-spacing:0.25px;">Language</div>
<div style="position:absolute;left:654px;top:236px;width:160px;height:24px;background:#EEEEEE;border:1px solid #7C7C7C;"></div>
<div style="position:absolute;left:654px;top:236px;width:159px;height:23px;overflow:hidden">
<div style="position:absolute;left:1px;top:5.96px;font-size:12.2px;line-height:14.03px;color:#111;font-weight:normal;white-space:nowrap;">Intra-Company for Paris Site</div>
</div>
<div style="position:absolute;left:654px;top:265px;width:160px;height:24px;background:#EEEEEE;border:1px solid #7C7C7C;"></div>
<div style="position:absolute;left:654px;top:265px;width:159px;height:23px;overflow:hidden">
<div style="position:absolute;left:1px;top:5.96px;font-size:12.2px;line-height:14.03px;color:#111;font-weight:normal;white-space:nowrap;">Eden</div>
</div>
<div style="position:absolute;left:654px;top:294px;width:90px;height:24px;background:#EEEEEE;border:1px solid #7C7C7C;"></div>
<div style="position:absolute;left:826.6px;top:247.66px;font-size:12.2px;line-height:14.03px;color:#222;font-weight:normal;white-space:nowrap;letter-spacing:0.25px;">Document Folder:</div>
<div style="position:absolute;left:826px;top:264px;width:216px;height:49px;background:#EEEEEE;border:2px solid #6E7885"></div>
<div style="position:absolute;left:1014px;top:240px;width:49px;height:23px;border:1px solid #C4C4C4;background:#fff"></div>
<div style="position:absolute;left:1024px;top:242px;width:30px;height:20px;border:1px solid #7E7474;border-radius:2px;background:#fff"></div>
<div style="position:absolute;left:1025.9px;top:246.46px;font-size:10.1px;line-height:11.61px;color:#000;font-weight:normal;white-space:nowrap;-webkit-text-stroke:0.25px #000">Reset</div>
<svg style="position:absolute;left:0;top:0" width="1188" height="358" viewBox="0 0 1188 358"><path d="M76.5 356V340.5L82.5 334.5H134.5V356" fill="#FF9B4F" stroke="#6D7F9A" stroke-width="1"/><path d="M77.5 356V341L83 335.5H133.5" fill="none" stroke="#FFFFFF" stroke-width="1" opacity="0.9"/><path d="M10.5 356V340.5L16.5 334.5H76.5V356" fill="#C54B2D" stroke="#5E81C4" stroke-width="1"/><path d="M11.5 356V341L17 335.5H75.5" fill="none" stroke="#FFFFFF" stroke-width="1" opacity="0.9"/></svg>
<div style="position:absolute;left:15.7px;top:339.32px;font-size:11.8px;line-height:13.57px;color:#FFFFFF;font-weight:bold;white-space:nowrap;">Item(s)</div>
<div style="position:absolute;left:82px;top:338.69px;font-size:12.5px;line-height:14.37px;color:#111;font-weight:normal;white-space:nowrap;letter-spacing:0.25px;">Labor</div>
<div style="position:absolute;left:8px;top:356px;width:1172px;height:302px;background:#C8DDF2;border-top:1px solid #5E81C4;border-left:1px solid #5E81C4;border-right:1px solid #7E8FA8;border-bottom:1px solid #7E8FA8"></div>
<div style="position:absolute;left:9px;top:357px;width:1170px;height:1px;background:#E6F0FA"></div>
<div style="position:absolute;left:11px;top:356px;width:65px;height:1px;background:#C8DDF2"></div>
<div style="position:absolute;left:10px;top:360px;width:1167px;height:295px;background:#fff;border:1px solid #B4B4B4"></div>
<div style="position:absolute;left:10px;top:393px;width:1167px;height:1px;background:#A9A9A9"></div>
<div style="position:absolute;left:45.1px;top:368.56px;font-size:12.2px;line-height:14.03px;color:#222;font-weight:normal;white-space:nowrap;letter-spacing:0.25px;">Search :</div>
<div style="position:absolute;left:119.9px;top:368.76px;font-size:12.2px;line-height:14.03px;color:#222;font-weight:normal;white-space:nowrap;letter-spacing:0.25px;">Asset</div>
<div style="position:absolute;left:162px;top:365px;width:120px;height:24px;background:#fff;border:1px solid #000;"></div>
<div style="position:absolute;left:362.1px;top:368.76px;font-size:12.2px;line-height:14.03px;color:#222;font-weight:normal;white-space:nowrap;letter-spacing:0.25px;">Product</div>
<div style="position:absolute;left:412px;top:365px;width:195px;height:24px;background:#fff;border:1px solid #000;"></div>
<div style="position:absolute;left:625.2px;top:369.09px;font-size:11.5px;line-height:13.22px;color:#222;font-weight:normal;white-space:nowrap;letter-spacing:-0.5px">Qty</div>
<div style="position:absolute;left:647px;top:365px;width:40px;height:24px;background:#fff;border:1px solid #000;"></div>
<div style="position:absolute;left:647px;top:365px;width:39px;height:23px;overflow:hidden">
<div style="position:absolute;left:1.5px;top:5.96px;font-size:12.2px;line-height:14.03px;color:#111;font-weight:normal;white-space:nowrap;">1</div>
</div>
<div style="position:absolute;left:724px;top:370.67px;font-size:12.3px;line-height:14.14px;color:#222;font-weight:normal;white-space:nowrap;">Update existing lines</div>
<div style="position:absolute;left:10px;top:395px;width:1167px;height:260px;border:1px solid #C4C4C4;background:#fff"></div>
<div style="position:absolute;left:12px;top:397px;width:1162px;height:256px;border:1px solid #5C6E84;background:#fff"></div>
<div style="position:absolute;left:13px;top:398px;width:1160px;height:237px;overflow:hidden"><div style="position:absolute;left:0px;top:0;width:15px;height:19px;background:#C44A2C;border:1px solid #7A2A18;box-shadow:inset 0 0 0 1px #FF6E3A;color:#fff;font-size:12.2px;line-height:20px;text-align:center;white-space:nowrap;overflow:hidden">T</div><div style="position:absolute;left:15px;top:0;width:14px;height:19px;background:#C44A2C;border:1px solid #7A2A18;box-shadow:inset 0 0 0 1px #FF6E3A;color:#fff;font-size:12.2px;line-height:20px;text-align:center;white-space:nowrap;overflow:hidden">C</div><div style="position:absolute;left:29px;top:0;width:15px;height:19px;background:#C44A2C;border:1px solid #7A2A18;box-shadow:inset 0 0 0 1px #FF6E3A;color:#fff;font-size:12.2px;line-height:20px;text-align:center;white-space:nowrap;overflow:hidden">X</div><div style="position:absolute;left:44px;top:0;width:15px;height:19px;background:#C44A2C;border:1px solid #7A2A18;box-shadow:inset 0 0 0 1px #FF6E3A;color:#fff;font-size:12.2px;line-height:20px;text-align:center;white-space:nowrap;overflow:hidden">M</div><div style="position:absolute;left:59px;top:0;width:15px;height:19px;background:#C44A2C;border:1px solid #7A2A18;box-shadow:inset 0 0 0 1px #FF6E3A;color:#fff;font-size:12.2px;line-height:20px;text-align:center;white-space:nowrap;overflow:hidden">S</div><div style="position:absolute;left:74px;top:0;width:20px;height:19px;background:#C44A2C;border:1px solid #7A2A18;box-shadow:inset 0 0 0 1px #FF6E3A;color:#fff;font-size:12.2px;line-height:20px;text-align:center;white-space:nowrap;overflow:hidden">I.C</div><div style="position:absolute;left:94px;top:0;width:20px;height:19px;background:#C44A2C;border:1px solid #7A2A18;box-shadow:inset 0 0 0 1px #FF6E3A;color:#fff;font-size:12.2px;line-height:20px;text-align:center;white-space:nowrap;overflow:hidden">I....</div><div style="position:absolute;left:114px;top:0;width:20px;height:19px;background:#C44A2C;border:1px solid #7A2A18;box-shadow:inset 0 0 0 1px #FF6E3A;color:#fff;font-size:12.2px;line-height:20px;text-align:center;white-space:nowrap;overflow:hidden">I.I</div><div style="position:absolute;left:134px;top:0;width:140px;height:19px;background:#C44A2C;border:1px solid #7A2A18;box-shadow:inset 0 0 0 1px #FF6E3A;color:#fff;font-size:12.2px;line-height:20px;text-align:center;white-space:nowrap;overflow:hidden">Modifications</div><div style="position:absolute;left:274px;top:0;width:75px;height:19px;background:#C44A2C;border:1px solid #7A2A18;box-shadow:inset 0 0 0 1px #FF6E3A;color:#fff;font-size:12.2px;line-height:20px;text-align:center;white-space:nowrap;overflow:hidden">Status</div><div style="position:absolute;left:349px;top:0;width:20px;height:19px;background:#C44A2C;border:1px solid #7A2A18;box-shadow:inset 0 0 0 1px #FF6E3A;color:#fff;font-size:12.2px;line-height:20px;text-align:center;white-space:nowrap;overflow:hidden">L</div><div style="position:absolute;left:369px;top:0;width:45px;height:19px;background:#C44A2C;border:1px solid #7A2A18;box-shadow:inset 0 0 0 1px #FF6E3A;color:#fff;font-size:12.2px;line-height:20px;text-align:center;white-space:nowrap;overflow:hidden">Action</div><div style="position:absolute;left:414px;top:0;width:100px;height:19px;background:#C44A2C;border:1px solid #7A2A18;box-shadow:inset 0 0 0 1px #FF6E3A;color:#fff;font-size:12.2px;line-height:20px;text-align:center;white-space:nowrap;overflow:hidden">Product ID</div><div style="position:absolute;left:514px;top:0;width:100px;height:19px;background:#C44A2C;border:1px solid #7A2A18;box-shadow:inset 0 0 0 1px #FF6E3A;color:#fff;font-size:12.2px;line-height:20px;text-align:center;white-space:nowrap;overflow:hidden">Description</div><div style="position:absolute;left:614px;top:0;width:55px;height:19px;background:#C44A2C;border:1px solid #7A2A18;box-shadow:inset 0 0 0 1px #FF6E3A;color:#fff;font-size:12.2px;line-height:20px;text-align:center;white-space:nowrap;overflow:hidden">Duration</div><div style="position:absolute;left:669px;top:0;width:30px;height:19px;background:#C44A2C;border:1px solid #7A2A18;box-shadow:inset 0 0 0 1px #FF6E3A;color:#fff;font-size:12.2px;line-height:20px;text-align:center;white-space:nowrap;overflow:hidden">Qty</div><div style="position:absolute;left:699px;top:0;width:100px;height:19px;background:#C44A2C;border:1px solid #7A2A18;box-shadow:inset 0 0 0 1px #FF6E3A;color:#fff;font-size:12.2px;line-height:20px;text-align:center;white-space:nowrap;overflow:hidden">Shipping Site</div><div style="position:absolute;left:799px;top:0;width:100px;height:19px;background:#C44A2C;border:1px solid #7A2A18;box-shadow:inset 0 0 0 1px #FF6E3A;color:#fff;font-size:12.2px;line-height:20px;text-align:center;white-space:nowrap;overflow:hidden">Returning Site</div><div style="position:absolute;left:899px;top:0;width:40px;height:19px;background:#C44A2C;border:1px solid #7A2A18;box-shadow:inset 0 0 0 1px #FF6E3A;color:#fff;font-size:12.2px;line-height:20px;text-align:center;white-space:nowrap;overflow:hidden">Unit</div><div style="position:absolute;left:939px;top:0;width:90px;height:19px;background:#C44A2C;border:1px solid #7A2A18;box-shadow:inset 0 0 0 1px #FF6E3A;color:#fff;font-size:12.2px;line-height:20px;text-align:center;white-space:nowrap;overflow:hidden">Day/Each Price</div><div style="position:absolute;left:1029px;top:0;width:70px;height:19px;background:#C44A2C;border:1px solid #7A2A18;box-shadow:inset 0 0 0 1px #FF6E3A;color:#fff;font-size:12.2px;line-height:20px;text-align:center;white-space:nowrap;overflow:hidden">Week Price</div><div style="position:absolute;left:1099px;top:0;width:74px;height:19px;background:#C44A2C;border:1px solid #7A2A18;box-shadow:inset 0 0 0 1px #FF6E3A;color:#fff;font-size:12.2px;line-height:20px;text-align:center;white-space:nowrap;overflow:hidden">Month Price</div><div style="position:absolute;left:0;top:19px;width:1160px;height:19px;background:#FF9B4F"></div><div style="position:absolute;left:0px;top:19px;width:16px;height:20px;border:1px solid #BE7436;"></div><div style="position:absolute;left:15px;top:19px;width:15px;height:20px;border:1px solid #BE7436;"></div><div style="position:absolute;left:29px;top:19px;width:16px;height:20px;border:1px solid #BE7436;"></div><div style="position:absolute;left:44px;top:19px;width:16px;height:20px;border:1px solid #BE7436;"></div><div style="position:absolute;left:59px;top:19px;width:16px;height:20px;border:1px solid #BE7436;"></div><div style="position:absolute;left:74px;top:19px;width:21px;height:20px;border:1px solid #BE7436;"></div><div style="position:absolute;left:94px;top:19px;width:21px;height:20px;border:1px solid #BE7436;"></div><div style="position:absolute;left:114px;top:19px;width:21px;height:20px;border:1px solid #BE7436;"></div><div style="position:absolute;left:134px;top:19px;width:141px;height:20px;border:1px solid #BE7436;"></div><div style="position:absolute;left:274px;top:19px;width:76px;height:20px;border:1px solid #BE7436;"></div><div style="position:absolute;left:274px;top:19px;width:75px;height:20px;font-size:12.2px;line-height:22px;color:#000;text-align:left;padding-left:2px;white-space:nowrap;overflow:hidden">Reserved</div><div style="position:absolute;left:349px;top:19px;width:21px;height:20px;border:1px solid #BE7436;"></div><div style="position:absolute;left:369px;top:19px;width:46px;height:20px;border:1px solid #BE7436;"></div><div style="position:absolute;left:369px;top:19px;width:45px;height:20px;font-size:12.2px;line-height:22px;color:#000;text-align:left;padding-left:2px;white-space:nowrap;overflow:hidden">Rent</div><div style="position:absolute;left:414px;top:19px;width:101px;height:20px;border:1px solid #BE7436;"></div><div style="position:absolute;left:414px;top:19px;width:100px;height:20px;font-size:12.2px;line-height:22px;color:#000;text-align:left;padding-left:2px;white-space:nowrap;overflow:hidden">LG STYLUS</div><div style="position:absolute;left:514px;top:19px;width:101px;height:20px;border:1px solid #BE7436;"></div><div style="position:absolute;left:514px;top:19px;width:100px;height:20px;font-size:12.2px;line-height:22px;color:#000;text-align:left;padding-left:2px;white-space:nowrap;overflow:hidden">LG STYLUS</div><div style="position:absolute;left:614px;top:19px;width:56px;height:20px;border:1px solid #BE7436;"></div><div style="position:absolute;left:614px;top:19px;width:55px;height:20px;font-size:12.2px;line-height:22px;color:#000;text-align:left;padding-left:2px;white-space:nowrap;overflow:hidden">0d</div><div style="position:absolute;left:669px;top:19px;width:31px;height:20px;border:1px solid #BE7436;"></div><div style="position:absolute;left:669px;top:19px;width:30px;height:20px;font-size:12.2px;line-height:22px;color:#000;text-align:right;padding-right:2px;white-space:nowrap;overflow:hidden">2</div><div style="position:absolute;left:699px;top:19px;width:101px;height:20px;border:1px solid #BE7436;"></div><div style="position:absolute;left:699px;top:19px;width:100px;height:20px;font-size:12.2px;line-height:22px;color:#000;text-align:left;padding-left:2px;white-space:nowrap;overflow:hidden">COLOGNE</div><div style="position:absolute;left:799px;top:19px;width:101px;height:20px;border:1px solid #BE7436;"></div><div style="position:absolute;left:799px;top:19px;width:100px;height:20px;font-size:12.2px;line-height:22px;color:#000;text-align:left;padding-left:2px;white-space:nowrap;overflow:hidden">PARIS</div><div style="position:absolute;left:899px;top:19px;width:41px;height:20px;border:1px solid #BE7436;"></div><div style="position:absolute;left:899px;top:19px;width:40px;height:20px;font-size:12.2px;line-height:22px;color:#000;text-align:left;padding-left:2px;white-space:nowrap;overflow:hidden">Day</div><div style="position:absolute;left:939px;top:19px;width:91px;height:20px;border:1px solid #BE7436;"></div><div style="position:absolute;left:939px;top:19px;width:90px;height:20px;font-size:12.2px;line-height:22px;color:#000;text-align:right;padding-right:2px;white-space:nowrap;overflow:hidden">0.00</div><div style="position:absolute;left:1029px;top:19px;width:71px;height:20px;border:1px solid #BE7436;"></div><div style="position:absolute;left:1029px;top:19px;width:70px;height:20px;font-size:12.2px;line-height:22px;color:#000;text-align:right;padding-right:2px;white-space:nowrap;overflow:hidden">0.00</div><div style="position:absolute;left:1099px;top:19px;width:75px;height:20px;border:1px solid #BE7436;"></div><div style="position:absolute;left:1099px;top:19px;width:74px;height:20px;font-size:12.2px;line-height:22px;color:#000;text-align:right;padding-right:2px;white-space:nowrap;overflow:hidden">0.00</div><div style="position:absolute;left:0;top:38px;width:1160px;height:19px;background:#FFFFFF"></div><div style="position:absolute;left:0px;top:38px;width:16px;height:20px;border:1px solid #BE7436;"></div><div style="position:absolute;left:15px;top:38px;width:15px;height:20px;border:1px solid #BE7436;"></div><div style="position:absolute;left:29px;top:38px;width:16px;height:20px;border:1px solid #BE7436;"></div><div style="position:absolute;left:44px;top:38px;width:16px;height:20px;border:1px solid #BE7436;"></div><div style="position:absolute;left:59px;top:38px;width:16px;height:20px;border:1px solid #BE7436;"></div><div style="position:absolute;left:74px;top:38px;width:21px;height:20px;border:1px solid #BE7436;"></div><div style="position:absolute;left:94px;top:38px;width:21px;height:20px;border:1px solid #BE7436;"></div><div style="position:absolute;left:114px;top:38px;width:21px;height:20px;border:1px solid #BE7436;"></div><div style="position:absolute;left:134px;top:38px;width:141px;height:20px;border:1px solid #BE7436;"></div><div style="position:absolute;left:274px;top:38px;width:76px;height:20px;border:1px solid #BE7436;"></div><div style="position:absolute;left:274px;top:38px;width:75px;height:20px;font-size:12.2px;line-height:22px;color:#000;text-align:left;padding-left:2px;white-space:nowrap;overflow:hidden">Reserved</div><div style="position:absolute;left:349px;top:38px;width:21px;height:20px;border:1px solid #BE7436;"></div><div style="position:absolute;left:369px;top:38px;width:46px;height:20px;border:1px solid #BE7436;"></div><div style="position:absolute;left:369px;top:38px;width:45px;height:20px;font-size:12.2px;line-height:22px;color:#000;text-align:left;padding-left:2px;white-space:nowrap;overflow:hidden">Rent</div><div style="position:absolute;left:414px;top:38px;width:101px;height:20px;border:1px solid #BE7436;"></div><div style="position:absolute;left:414px;top:38px;width:100px;height:20px;font-size:12.2px;line-height:22px;color:#000;text-align:left;padding-left:2px;white-space:nowrap;overflow:hidden">LG STYLUS</div><div style="position:absolute;left:514px;top:38px;width:101px;height:20px;border:1px solid #BE7436;"></div><div style="position:absolute;left:514px;top:38px;width:100px;height:20px;font-size:12.2px;line-height:22px;color:#000;text-align:left;padding-left:2px;white-space:nowrap;overflow:hidden">LG STYLUS</div><div style="position:absolute;left:614px;top:38px;width:56px;height:20px;border:1px solid #BE7436;"></div><div style="position:absolute;left:614px;top:38px;width:55px;height:20px;font-size:12.2px;line-height:22px;color:#000;text-align:left;padding-left:2px;white-space:nowrap;overflow:hidden">0d</div><div style="position:absolute;left:669px;top:38px;width:31px;height:20px;border:1px solid #BE7436;"></div><div style="position:absolute;left:669px;top:38px;width:30px;height:20px;font-size:12.2px;line-height:22px;color:#000;text-align:right;padding-right:2px;white-space:nowrap;overflow:hidden">2</div><div style="position:absolute;left:699px;top:38px;width:101px;height:20px;border:1px solid #BE7436;"></div><div style="position:absolute;left:699px;top:38px;width:100px;height:20px;font-size:12.2px;line-height:22px;color:#000;text-align:left;padding-left:2px;white-space:nowrap;overflow:hidden">BUDAPEST</div><div style="position:absolute;left:799px;top:38px;width:101px;height:20px;border:1px solid #BE7436;"></div><div style="position:absolute;left:799px;top:38px;width:100px;height:20px;font-size:12.2px;line-height:22px;color:#000;text-align:left;padding-left:2px;white-space:nowrap;overflow:hidden">PARIS</div><div style="position:absolute;left:899px;top:38px;width:41px;height:20px;border:1px solid #BE7436;"></div><div style="position:absolute;left:899px;top:38px;width:40px;height:20px;font-size:12.2px;line-height:22px;color:#000;text-align:left;padding-left:2px;white-space:nowrap;overflow:hidden">Day</div><div style="position:absolute;left:939px;top:38px;width:91px;height:20px;border:1px solid #BE7436;"></div><div style="position:absolute;left:939px;top:38px;width:90px;height:20px;font-size:12.2px;line-height:22px;color:#000;text-align:right;padding-right:2px;white-space:nowrap;overflow:hidden">0.00</div><div style="position:absolute;left:1029px;top:38px;width:71px;height:20px;border:1px solid #BE7436;"></div><div style="position:absolute;left:1029px;top:38px;width:70px;height:20px;font-size:12.2px;line-height:22px;color:#000;text-align:right;padding-right:2px;white-space:nowrap;overflow:hidden">0.00</div><div style="position:absolute;left:1099px;top:38px;width:75px;height:20px;border:1px solid #BE7436;"></div><div style="position:absolute;left:1099px;top:38px;width:74px;height:20px;font-size:12.2px;line-height:22px;color:#000;text-align:right;padding-right:2px;white-space:nowrap;overflow:hidden">0.00</div><div style="position:absolute;left:0;top:57px;width:1160px;height:19px;background:#FFFFFF"></div><div style="position:absolute;left:0px;top:57px;width:16px;height:20px;border:1px solid #BE7436;"></div><div style="position:absolute;left:15px;top:57px;width:15px;height:20px;border:1px solid #BE7436;"></div><div style="position:absolute;left:29px;top:57px;width:16px;height:20px;border:1px solid #BE7436;"></div><div style="position:absolute;left:44px;top:57px;width:16px;height:20px;border:1px solid #BE7436;"></div><div style="position:absolute;left:59px;top:57px;width:16px;height:20px;border:1px solid #BE7436;"></div><div style="position:absolute;left:74px;top:57px;width:21px;height:20px;border:1px solid #BE7436;"></div><div style="position:absolute;left:94px;top:57px;width:21px;height:20px;border:1px solid #BE7436;"></div><div style="position:absolute;left:114px;top:57px;width:21px;height:20px;border:1px solid #BE7436;"></div><div style="position:absolute;left:134px;top:57px;width:141px;height:20px;border:1px solid #BE7436;"></div><div style="position:absolute;left:274px;top:57px;width:76px;height:20px;border:1px solid #BE7436;"></div><div style="position:absolute;left:274px;top:57px;width:75px;height:20px;font-size:12.2px;line-height:22px;color:#000;text-align:left;padding-left:2px;white-space:nowrap;overflow:hidden">Reserved</div><div style="position:absolute;left:349px;top:57px;width:21px;height:20px;border:1px solid #BE7436;"></div><div style="position:absolute;left:369px;top:57px;width:46px;height:20px;border:1px solid #BE7436;"></div><div style="position:absolute;left:369px;top:57px;width:45px;height:20px;font-size:12.2px;line-height:22px;color:#000;text-align:left;padding-left:2px;white-space:nowrap;overflow:hidden">Rent</div><div style="position:absolute;left:414px;top:57px;width:101px;height:20px;border:1px solid #BE7436;"></div><div style="position:absolute;left:414px;top:57px;width:100px;height:20px;font-size:12.2px;line-height:22px;color:#000;text-align:left;padding-left:2px;white-space:nowrap;overflow:hidden">LG STYLUS</div><div style="position:absolute;left:514px;top:57px;width:101px;height:20px;border:1px solid #BE7436;"></div><div style="position:absolute;left:514px;top:57px;width:100px;height:20px;font-size:12.2px;line-height:22px;color:#000;text-align:left;padding-left:2px;white-space:nowrap;overflow:hidden">LG STYLUS</div><div style="position:absolute;left:614px;top:57px;width:56px;height:20px;border:1px solid #BE7436;"></div><div style="position:absolute;left:614px;top:57px;width:55px;height:20px;font-size:12.2px;line-height:22px;color:#000;text-align:left;padding-left:2px;white-space:nowrap;overflow:hidden">0d</div><div style="position:absolute;left:669px;top:57px;width:31px;height:20px;border:1px solid #BE7436;"></div><div style="position:absolute;left:669px;top:57px;width:30px;height:20px;font-size:12.2px;line-height:22px;color:#000;text-align:right;padding-right:2px;white-space:nowrap;overflow:hidden">2</div><div style="position:absolute;left:699px;top:57px;width:101px;height:20px;border:1px solid #BE7436;"></div><div style="position:absolute;left:699px;top:57px;width:100px;height:20px;font-size:12.2px;line-height:22px;color:#000;text-align:left;padding-left:2px;white-space:nowrap;overflow:hidden">BERLIN</div><div style="position:absolute;left:799px;top:57px;width:101px;height:20px;border:1px solid #BE7436;"></div><div style="position:absolute;left:799px;top:57px;width:100px;height:20px;font-size:12.2px;line-height:22px;color:#000;text-align:left;padding-left:2px;white-space:nowrap;overflow:hidden">PARIS</div><div style="position:absolute;left:899px;top:57px;width:41px;height:20px;border:1px solid #BE7436;"></div><div style="position:absolute;left:899px;top:57px;width:40px;height:20px;font-size:12.2px;line-height:22px;color:#000;text-align:left;padding-left:2px;white-space:nowrap;overflow:hidden">Day</div><div style="position:absolute;left:939px;top:57px;width:91px;height:20px;border:1px solid #BE7436;"></div><div style="position:absolute;left:939px;top:57px;width:90px;height:20px;font-size:12.2px;line-height:22px;color:#000;text-align:right;padding-right:2px;white-space:nowrap;overflow:hidden">0.00</div><div style="position:absolute;left:1029px;top:57px;width:71px;height:20px;border:1px solid #BE7436;"></div><div style="position:absolute;left:1029px;top:57px;width:70px;height:20px;font-size:12.2px;line-height:22px;color:#000;text-align:right;padding-right:2px;white-space:nowrap;overflow:hidden">0.00</div><div style="position:absolute;left:1099px;top:57px;width:75px;height:20px;border:1px solid #BE7436;"></div><div style="position:absolute;left:1099px;top:57px;width:74px;height:20px;font-size:12.2px;line-height:22px;color:#000;text-align:right;padding-right:2px;white-space:nowrap;overflow:hidden">0.00</div></div>
<div style="position:absolute;left:13px;top:635px;width:1160px;height:17px;background:#EEEEEE;border-top:1px solid #7088A0;border-bottom:1px solid #7088A0"></div>
<div style="position:absolute;left:13px;top:635px;width:16px;height:17px;background:#EEEEEE;border:1px solid #7088A0"></div>
<svg style="position:absolute;left:18px;top:640px" width="5" height="8" viewBox="0 0 5 8"><path d="M5 0V8L0 4Z" fill="#222"/></svg>
<div style="position:absolute;left:28px;top:635px;width:547px;height:17px;background:linear-gradient(170deg,#F2C6A6,#E8A474 70%,#E6A070);border:1px solid #F8C000;box-shadow:inset 0 0 0 1px #EDA070"></div>
<svg style="position:absolute;left:298px;top:639px" width="7" height="9" viewBox="0 0 7 9"><path d="M0.5 0V9M3.5 0V9M6.5 0V9" stroke="#A07050" stroke-width="1"/></svg>
<div style="position:absolute;left:1156px;top:635px;width:17px;height:17px;background:#EEEEEE;border:1px solid #7088A0"></div>
<svg style="position:absolute;left:1162px;top:640px" width="5" height="8" viewBox="0 0 5 8"><path d="M0 0V8L5 4Z" fill="#222"/></svg>
<div style="position:absolute;left:70px;top:666.05px;font-size:14.2px;line-height:16.33px;color:#222;font-weight:bold;white-space:nowrap;">Items</div>
<div style="position:absolute;left:120px;top:661px;width:100px;height:24px;background:#EEEEEE;border:1px solid #7C7C7C;"></div>
<div style="position:absolute;left:235px;top:666.05px;font-size:14.2px;line-height:16.33px;color:#222;font-weight:bold;white-space:nowrap;">Labor</div>
<div style="position:absolute;left:287px;top:661px;width:100px;height:24px;background:#EEEEEE;border:1px solid #7C7C7C;"></div>
<div style="position:absolute;left:446.2px;top:666.05px;font-size:14.2px;line-height:16.33px;color:#222;font-weight:bold;white-space:nowrap;">Sub Total</div>
<div style="position:absolute;left:525px;top:661px;width:100px;height:24px;background:#EEEEEE;border:1px solid #7C7C7C;"></div>
<div style="position:absolute;left:636.2px;top:666.05px;font-size:14.2px;line-height:16.33px;color:#222;font-weight:bold;white-space:nowrap;">Tax</div>
<div style="position:absolute;left:670px;top:661px;width:100px;height:24px;background:#EEEEEE;border:1px solid #7C7C7C;"></div>
<div style="position:absolute;left:813px;top:661px;width:89px;height:23px;border:1px solid #C4C4C4;background:#fff"></div>
<div style="position:absolute;left:657.5px;width:400px;text-align:center;top:666.05px;font-size:14.2px;line-height:16.33px;color:#222;font-weight:bold;white-space:nowrap;">Total</div>
<div style="position:absolute;left:906px;top:661px;width:100px;height:24px;background:#EEEEEE;border:1px solid #7C7C7C;"></div>
<div style="position:absolute;left:907.3px;top:666.29px;font-size:13.6px;line-height:15.64px;color:#111;font-weight:bold;white-space:nowrap;">0.00</div>
<div style="position:absolute;left:8px;top:695px;width:1172px;height:25px;border:1px solid #fff;border-top-color:#CFCFCF;border-left-color:#CFCFCF;background:#fff"></div>
<div style="position:absolute;left:9px;top:696px;width:1170px;height:23px;border:1px solid #C4C4C4;border-top-color:#7A7A7A;border-left-color:#7A7A7A;background:#fff"></div>
<svg style="position:absolute;left:0;top:0" width="1188" height="728" viewBox="0 0 1188 728"><defs><radialGradient id="gl2" cx="0.45" cy="0.4" r="0.6"><stop offset="0" stop-color="#FFFFFF"/><stop offset="1" stop-color="#9CD4F8"/></radialGradient><linearGradient id="gchk" x1="0" y1="0" x2="1" y2="1"><stop offset="0.05" stop-color="#FFFFFF"/><stop offset="0.55" stop-color="#F6B888"/><stop offset="1" stop-color="#EE8A48"/></linearGradient></defs><path d="M342.8 139.8L347.6 144.6" stroke="#4A4868" stroke-width="3.8" stroke-linecap="round"/><path d="M343.6 139.6L347.9 143.9" stroke="#F4A440" stroke-width="2" stroke-linecap="round"/><circle cx="338.6" cy="136.3" r="5" fill="none" stroke="#3A3A4A" stroke-width="1.4" opacity="0.55"/><circle cx="339" cy="136" r="4.7" fill="url(#gl2)" stroke="#7A78A8" stroke-width="1.1"/><path d="M336.5 134.5Q338 132.6 340 133" stroke="#fff" stroke-width="0.9" fill="none" opacity="0.8"/><path d="M342.8 195.8L347.6 200.6" stroke="#4A4868" stroke-width="3.8" stroke-linecap="round"/><path d="M343.6 195.6L347.9 199.9" stroke="#F4A440" stroke-width="2" stroke-linecap="round"/><circle cx="338.6" cy="192.3" r="5" fill="none" stroke="#3A3A4A" stroke-width="1.4" opacity="0.55"/><circle cx="339" cy="192" r="4.7" fill="url(#gl2)" stroke="#7A78A8" stroke-width="1.1"/><path d="M336.5 190.5Q338 188.6 340 189" stroke="#fff" stroke-width="0.9" fill="none" opacity="0.8"/><path d="M327.8 252.8L332.6 257.6" stroke="#4A4868" stroke-width="3.8" stroke-linecap="round"/><path d="M328.6 252.6L332.9 256.9" stroke="#F4A440" stroke-width="2" stroke-linecap="round"/><circle cx="323.6" cy="249.3" r="5" fill="none" stroke="#3A3A4A" stroke-width="1.4" opacity="0.55"/><circle cx="324" cy="249" r="4.7" fill="url(#gl2)" stroke="#7A78A8" stroke-width="1.1"/><path d="M321.5 247.5Q323 245.6 325 246" stroke="#fff" stroke-width="0.9" fill="none" opacity="0.8"/><path d="M327.8 280.8L332.6 285.6" stroke="#4A4868" stroke-width="3.8" stroke-linecap="round"/><path d="M328.6 280.6L332.9 284.9" stroke="#F4A440" stroke-width="2" stroke-linecap="round"/><circle cx="323.6" cy="277.3" r="5" fill="none" stroke="#3A3A4A" stroke-width="1.4" opacity="0.55"/><circle cx="324" cy="277" r="4.7" fill="url(#gl2)" stroke="#7A78A8" stroke-width="1.1"/><path d="M321.5 275.5Q323 273.6 325 274" stroke="#fff" stroke-width="0.9" fill="none" opacity="0.8"/><path d="M344.8 307.8L349.6 312.6" stroke="#4A4868" stroke-width="3.8" stroke-linecap="round"/><path d="M345.6 307.6L349.9 311.9" stroke="#F4A440" stroke-width="2" stroke-linecap="round"/><circle cx="340.6" cy="304.3" r="5" fill="none" stroke="#3A3A4A" stroke-width="1.4" opacity="0.55"/><circle cx="341" cy="304" r="4.7" fill="url(#gl2)" stroke="#7A78A8" stroke-width="1.1"/><path d="M338.5 302.5Q340 300.6 342 301" stroke="#fff" stroke-width="0.9" fill="none" opacity="0.8"/><path d="M1019.8 166.8L1024.6 171.6" stroke="#4A4868" stroke-width="3.8" stroke-linecap="round"/><path d="M1020.6 166.6L1024.9 170.9" stroke="#F4A440" stroke-width="2" stroke-linecap="round"/><circle cx="1015.6" cy="163.3" r="5" fill="none" stroke="#3A3A4A" stroke-width="1.4" opacity="0.55"/><circle cx="1016" cy="163" r="4.7" fill="url(#gl2)" stroke="#7A78A8" stroke-width="1.1"/><path d="M1013.5 161.5Q1015 159.6 1017 160" stroke="#fff" stroke-width="0.9" fill="none" opacity="0.8"/><path d="M571.8 247.8L576.6 252.6" stroke="#4A4868" stroke-width="3.8" stroke-linecap="round"/><path d="M572.6 247.6L576.9 251.9" stroke="#F4A440" stroke-width="2" stroke-linecap="round"/><circle cx="567.6" cy="244.3" r="5" fill="none" stroke="#3A3A4A" stroke-width="1.4" opacity="0.55"/><circle cx="568" cy="244" r="4.7" fill="url(#gl2)" stroke="#7A78A8" stroke-width="1.1"/><path d="M565.5 242.5Q567 240.6 569 241" stroke="#fff" stroke-width="0.9" fill="none" opacity="0.8"/><path d="M571.8 276.8L576.6 281.6" stroke="#4A4868" stroke-width="3.8" stroke-linecap="round"/><path d="M572.6 276.6L576.9 280.9" stroke="#F4A440" stroke-width="2" stroke-linecap="round"/><circle cx="567.6" cy="273.3" r="5" fill="none" stroke="#3A3A4A" stroke-width="1.4" opacity="0.55"/><circle cx="568" cy="273" r="4.7" fill="url(#gl2)" stroke="#7A78A8" stroke-width="1.1"/><path d="M565.5 271.5Q567 269.6 569 270" stroke="#fff" stroke-width="0.9" fill="none" opacity="0.8"/><path d="M804.8 247.8L809.6 252.6" stroke="#4A4868" stroke-width="3.8" stroke-linecap="round"/><path d="M805.6 247.6L809.9 251.9" stroke="#F4A440" stroke-width="2" stroke-linecap="round"/><circle cx="800.6" cy="244.3" r="5" fill="none" stroke="#3A3A4A" stroke-width="1.4" opacity="0.55"/><circle cx="801" cy="244" r="4.7" fill="url(#gl2)" stroke="#7A78A8" stroke-width="1.1"/><path d="M798.5 242.5Q800 240.6 802 241" stroke="#fff" stroke-width="0.9" fill="none" opacity="0.8"/><path d="M804.8 276.8L809.6 281.6" stroke="#4A4868" stroke-width="3.8" stroke-linecap="round"/><path d="M805.6 276.6L809.9 280.9" stroke="#F4A440" stroke-width="2" stroke-linecap="round"/><circle cx="800.6" cy="273.3" r="5" fill="none" stroke="#3A3A4A" stroke-width="1.4" opacity="0.55"/><circle cx="801" cy="273" r="4.7" fill="url(#gl2)" stroke="#7A78A8" stroke-width="1.1"/><path d="M798.5 271.5Q800 269.6 802 270" stroke="#fff" stroke-width="0.9" fill="none" opacity="0.8"/><path d="M734.8 305.8L739.6 310.6" stroke="#4A4868" stroke-width="3.8" stroke-linecap="round"/><path d="M735.6 305.6L739.9 309.9" stroke="#F4A440" stroke-width="2" stroke-linecap="round"/><circle cx="730.6" cy="302.3" r="5" fill="none" stroke="#3A3A4A" stroke-width="1.4" opacity="0.55"/><circle cx="731" cy="302" r="4.7" fill="url(#gl2)" stroke="#7A78A8" stroke-width="1.1"/><path d="M728.5 300.5Q730 298.6 732 299" stroke="#fff" stroke-width="0.9" fill="none" opacity="0.8"/><rect x="590.5" y="161.5" width="11" height="11" fill="none" stroke="#FFFFFF"/><rect x="589.5" y="160.5" width="11" height="11" fill="none" stroke="#5A6878"/><rect x="591" y="162" width="9.5" height="9.5" fill="url(#gchk)"/><path d="M592.2 166.4L594.4 166L594.6 168.4L598.8 163.6L599.5 164.5L594.6 170.6L592.6 170.6Z" fill="#151515"/><rect x="590.5" y="181.5" width="11" height="11" fill="none" stroke="#FFFFFF"/><rect x="589.5" y="180.5" width="11" height="11" fill="none" stroke="#B4C8DE"/><rect x="591" y="182" width="9.5" height="9.5" fill="url(#gchk)"/><rect x="590.5" y="201.5" width="11" height="11" fill="none" stroke="#FFFFFF"/><rect x="589.5" y="200.5" width="11" height="11" fill="none" stroke="#5A6878"/><rect x="591" y="202" width="9.5" height="9.5" fill="url(#gchk)"/><path d="M592.2 206.4L594.4 206L594.6 208.4L598.8 203.6L599.5 204.5L594.6 210.6L592.6 210.6Z" fill="#151515"/><rect x="708.5" y="372.5" width="11" height="11" fill="none" stroke="#FFFFFF"/><rect x="707.5" y="371.5" width="11" height="11" fill="none" stroke="#5A6878"/><rect x="709" y="373" width="9.5" height="9.5" fill="url(#gchk)"/><rect x="15.5" y="422.5" width="11" height="11" fill="none" stroke="#FFFFFF"/><rect x="14.5" y="421.5" width="11" height="11" fill="none" stroke="#5A6878"/><rect x="16" y="423" width="9.5" height="9.5" fill="url(#gchk)"/><path d="M17.2 427.4L19.4 427L19.6 429.4L23.8 424.6L24.5 425.5L19.6 431.6L17.6 431.6Z" fill="#151515"/><rect x="30.5" y="422.5" width="11" height="11" fill="none" stroke="#FFFFFF"/><rect x="29.5" y="421.5" width="11" height="11" fill="none" stroke="#5A6878"/><rect x="31" y="423" width="9.5" height="9.5" fill="url(#gchk)"/><rect x="44.5" y="422.5" width="11" height="11" fill="none" stroke="#FFFFFF"/><rect x="43.5" y="421.5" width="11" height="11" fill="none" stroke="#5A6878"/><rect x="45" y="423" width="9.5" height="9.5" fill="url(#gchk)"/><rect x="59.5" y="422.5" width="11" height="11" fill="none" stroke="#FFFFFF"/><rect x="58.5" y="421.5" width="11" height="11" fill="none" stroke="#5A6878"/><rect x="60" y="423" width="9.5" height="9.5" fill="url(#gchk)"/><rect x="74.5" y="422.5" width="11" height="11" fill="none" stroke="#FFFFFF"/><rect x="73.5" y="421.5" width="11" height="11" fill="none" stroke="#5A6878"/><rect x="75" y="423" width="9.5" height="9.5" fill="url(#gchk)"/><rect x="92.5" y="422.5" width="11" height="11" fill="none" stroke="#FFFFFF"/><rect x="91.5" y="421.5" width="11" height="11" fill="none" stroke="#5A6878"/><rect x="93" y="423" width="9.5" height="9.5" fill="url(#gchk)"/><rect x="112.5" y="422.5" width="11" height="11" fill="none" stroke="#FFFFFF"/><rect x="111.5" y="421.5" width="11" height="11" fill="none" stroke="#5A6878"/><rect x="113" y="423" width="9.5" height="9.5" fill="url(#gchk)"/><rect x="132.5" y="422.5" width="11" height="11" fill="none" stroke="#FFFFFF"/><rect x="131.5" y="421.5" width="11" height="11" fill="none" stroke="#5A6878"/><rect x="133" y="423" width="9.5" height="9.5" fill="url(#gchk)"/><rect x="367.5" y="422.5" width="11" height="11" fill="none" stroke="#FFFFFF"/><rect x="366.5" y="421.5" width="11" height="11" fill="none" stroke="#5A6878"/><rect x="368" y="423" width="9.5" height="9.5" fill="url(#gchk)"/><rect x="15.5" y="441.5" width="11" height="11" fill="none" stroke="#FFFFFF"/><rect x="14.5" y="440.5" width="11" height="11" fill="none" stroke="#5A6878"/><rect x="16" y="442" width="9.5" height="9.5" fill="url(#gchk)"/><path d="M17.2 446.4L19.4 446L19.6 448.4L23.8 443.6L24.5 444.5L19.6 450.6L17.6 450.6Z" fill="#151515"/><rect x="30.5" y="441.5" width="11" height="11" fill="none" stroke="#FFFFFF"/><rect x="29.5" y="440.5" width="11" height="11" fill="none" stroke="#5A6878"/><rect x="31" y="442" width="9.5" height="9.5" fill="url(#gchk)"/><rect x="44.5" y="441.5" width="11" height="11" fill="none" stroke="#FFFFFF"/><rect x="43.5" y="440.5" width="11" height="11" fill="none" stroke="#5A6878"/><rect x="45" y="442" width="9.5" height="9.5" fill="url(#gchk)"/><rect x="59.5" y="441.5" width="11" height="11" fill="none" stroke="#FFFFFF"/><rect x="58.5" y="440.5" width="11" height="11" fill="none" stroke="#5A6878"/><rect x="60" y="442" width="9.5" height="9.5" fill="url(#gchk)"/><rect x="74.5" y="441.5" width="11" height="11" fill="none" stroke="#FFFFFF"/><rect x="73.5" y="440.5" width="11" height="11" fill="none" stroke="#5A6878"/><rect x="75" y="442" width="9.5" height="9.5" fill="url(#gchk)"/><rect x="92.5" y="441.5" width="11" height="11" fill="none" stroke="#FFFFFF"/><rect x="91.5" y="440.5" width="11" height="11" fill="none" stroke="#5A6878"/><rect x="93" y="442" width="9.5" height="9.5" fill="url(#gchk)"/><rect x="112.5" y="441.5" width="11" height="11" fill="none" stroke="#FFFFFF"/><rect x="111.5" y="440.5" width="11" height="11" fill="none" stroke="#5A6878"/><rect x="113" y="442" width="9.5" height="9.5" fill="url(#gchk)"/><rect x="132.5" y="441.5" width="11" height="11" fill="none" stroke="#FFFFFF"/><rect x="131.5" y="440.5" width="11" height="11" fill="none" stroke="#5A6878"/><rect x="133" y="442" width="9.5" height="9.5" fill="url(#gchk)"/><rect x="367.5" y="441.5" width="11" height="11" fill="none" stroke="#FFFFFF"/><rect x="366.5" y="440.5" width="11" height="11" fill="none" stroke="#5A6878"/><rect x="368" y="442" width="9.5" height="9.5" fill="url(#gchk)"/><rect x="15.5" y="460.5" width="11" height="11" fill="none" stroke="#FFFFFF"/><rect x="14.5" y="459.5" width="11" height="11" fill="none" stroke="#5A6878"/><rect x="16" y="461" width="9.5" height="9.5" fill="url(#gchk)"/><path d="M17.2 465.4L19.4 465L19.6 467.4L23.8 462.6L24.5 463.5L19.6 469.6L17.6 469.6Z" fill="#151515"/><rect x="30.5" y="460.5" width="11" height="11" fill="none" stroke="#FFFFFF"/><rect x="29.5" y="459.5" width="11" height="11" fill="none" stroke="#5A6878"/><rect x="31" y="461" width="9.5" height="9.5" fill="url(#gchk)"/><rect x="44.5" y="460.5" width="11" height="11" fill="none" stroke="#FFFFFF"/><rect x="43.5" y="459.5" width="11" height="11" fill="none" stroke="#5A6878"/><rect x="45" y="461" width="9.5" height="9.5" fill="url(#gchk)"/><rect x="59.5" y="460.5" width="11" height="11" fill="none" stroke="#FFFFFF"/><rect x="58.5" y="459.5" width="11" height="11" fill="none" stroke="#5A6878"/><rect x="60" y="461" width="9.5" height="9.5" fill="url(#gchk)"/><rect x="74.5" y="460.5" width="11" height="11" fill="none" stroke="#FFFFFF"/><rect x="73.5" y="459.5" width="11" height="11" fill="none" stroke="#5A6878"/><rect x="75" y="461" width="9.5" height="9.5" fill="url(#gchk)"/><rect x="92.5" y="460.5" width="11" height="11" fill="none" stroke="#FFFFFF"/><rect x="91.5" y="459.5" width="11" height="11" fill="none" stroke="#5A6878"/><rect x="93" y="461" width="9.5" height="9.5" fill="url(#gchk)"/><rect x="112.5" y="460.5" width="11" height="11" fill="none" stroke="#FFFFFF"/><rect x="111.5" y="459.5" width="11" height="11" fill="none" stroke="#5A6878"/><rect x="113" y="461" width="9.5" height="9.5" fill="url(#gchk)"/><rect x="132.5" y="460.5" width="11" height="11" fill="none" stroke="#FFFFFF"/><rect x="131.5" y="459.5" width="11" height="11" fill="none" stroke="#5A6878"/><rect x="133" y="461" width="9.5" height="9.5" fill="url(#gchk)"/><rect x="367.5" y="460.5" width="11" height="11" fill="none" stroke="#FFFFFF"/><rect x="366.5" y="459.5" width="11" height="11" fill="none" stroke="#5A6878"/><rect x="368" y="461" width="9.5" height="9.5" fill="url(#gchk)"/></svg>
</body></html>
